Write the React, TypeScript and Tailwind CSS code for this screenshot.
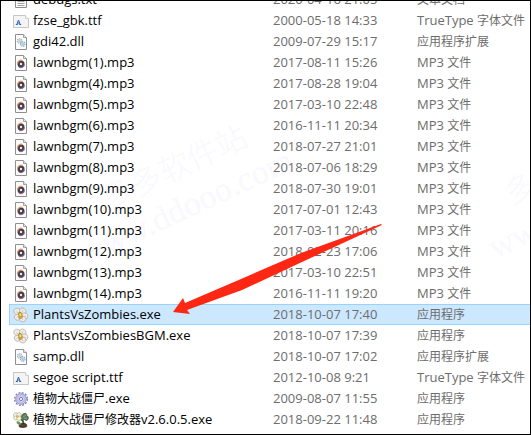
import type { ReactNode } from "react";

type Kind = "txt" | "ttf" | "dll" | "mp3" | "flower" | "gear" | "plant";

type FileRow = {
  name: string;
  date: string;
  type: string;
  kind: Kind;
};

const SELECTED = "PlantsVsZombies.exe";

const files: FileRow[] = [
  { name: "debugs.txt", date: "2020-04-16 21:05", type: "文本文档", kind: "txt" },
  { name: "fzse_gbk.ttf", date: "2000-05-18 14:33", type: "TrueType 字体文件", kind: "ttf" },
  { name: "gdi42.dll", date: "2009-07-29 15:17", type: "应用程序扩展", kind: "dll" },
  { name: "lawnbgm(1).mp3", date: "2017-08-11 15:26", type: "MP3 文件", kind: "mp3" },
  { name: "lawnbgm(4).mp3", date: "2017-08-28 19:04", type: "MP3 文件", kind: "mp3" },
  { name: "lawnbgm(5).mp3", date: "2017-03-10 22:48", type: "MP3 文件", kind: "mp3" },
  { name: "lawnbgm(6).mp3", date: "2016-11-11 20:34", type: "MP3 文件", kind: "mp3" },
  { name: "lawnbgm(7).mp3", date: "2018-07-27 21:01", type: "MP3 文件", kind: "mp3" },
  { name: "lawnbgm(8).mp3", date: "2018-07-06 18:29", type: "MP3 文件", kind: "mp3" },
  { name: "lawnbgm(9).mp3", date: "2018-07-30 19:01", type: "MP3 文件", kind: "mp3" },
  { name: "lawnbgm(10).mp3", date: "2017-07-01 12:43", type: "MP3 文件", kind: "mp3" },
  { name: "lawnbgm(11).mp3", date: "2017-03-11 20:16", type: "MP3 文件", kind: "mp3" },
  { name: "lawnbgm(12).mp3", date: "2018-02-23 17:06", type: "MP3 文件", kind: "mp3" },
  { name: "lawnbgm(13).mp3", date: "2017-03-10 22:51", type: "MP3 文件", kind: "mp3" },
  { name: "lawnbgm(14).mp3", date: "2016-11-11 19:20", type: "MP3 文件", kind: "mp3" },
  { name: "PlantsVsZombies.exe", date: "2018-10-07 17:40", type: "应用程序", kind: "flower" },
  { name: "PlantsVsZombiesBGM.exe", date: "2018-10-07 17:39", type: "应用程序", kind: "flower" },
  { name: "samp.dll", date: "2018-10-07 17:02", type: "应用程序扩展", kind: "dll" },
  { name: "segoe script.ttf", date: "2012-10-08 9:21", type: "TrueType 字体文件", kind: "ttf" },
  { name: "植物大战僵尸.exe", date: "2009-08-07 11:55", type: "应用程序", kind: "gear" },
  { name: "植物大战僵尸修改器v2.6.0.5.exe", date: "2018-09-22 11:48", type: "应用程序", kind: "plant" },
];

function Page({ children }: { children?: ReactNode }) {
  return (
    <>
      <path d="M2.5.5h8l3 3v12h-11z" fill="#fdfdfd" stroke="#8f8f8f" />
      <path d="M10.5.5v3h3" fill="#e8e8e8" stroke="#a0a0a0" />
      {children}
    </>
  );
}

function Flower() {
  return (
    <>
      <g fill="#efebe6" stroke="#a09890" strokeWidth=".6">
        <path d="M7 8C3 8.500.6 6.500.8 3.600 1.500.8 5 .6 7 2.500 8 4 8 6 7 8z" />
        <path d="M7 7C6 4 6.500 1 9.500 1c3 .2 4 3 3.300 5-1 2.500-4 3-5.800 1z" />
        <path d="M8 8c1.500-2.500 5-2.600 6.500-.5 1 2.500-.5 5-3 5.200-2.500-.5-4-2.500-3.500-4.700z" />
        <path d="M7.500 9c2.500-.5 5.500 1 5.500 3.500-.5 2.500-3.500 3-5.500 1.800C6 12.800 6 10.500 7.500 9z" />
        <path d="M7 8.500c.5 2.500-.5 5-2.700 4.800C2 13 .6 10.500 1.600 8.500c1.500-1.800 4-1.500 5.400 0z" />
      </g>
      <path d="M3 4.500l3 2M10 3L8.800 6M13 9.500l-3-.3M10 13l-1.300-2.200M3.500 10.500l2-1.200" stroke="#c9c0b6" strokeWidth=".7" />
      <path d="M6 5.500c1.500-.6 3 .2 3 2.500 1 2-.2 3.500-1.500 3.500S5.200 10.500 5.800 8.500C5.300 7.500 5.300 6 6 5.500z" fill="#d9a92c" stroke="#8d7131" strokeWidth=".6" />
      <ellipse cx="7.300" cy="7.800" rx="1" ry="1.300" fill="#ffe765" />
    </>
  );
}

function FileIcon({ kind }: { kind: Kind }) {
  return (
    <svg className="size-4 shrink-0" viewBox="0 0 16 16" fill="none" aria-hidden="true">
      {kind === "txt" && (
        <Page>
          <path d="M4.500 5.500h7M4.500 7.500h7M4.500 9.500h7M4.500 11.500h7M4.500 13.500h7" stroke="#a4a4a4" />
        </Page>
      )}
      {kind === "mp3" && (
        <Page>
          <circle cx="8" cy="9" r="3.500" fill="#413f4a" />
          <path d="M4.600 8.500A3.500 3.500 0 0 1 9.500 5.500" stroke="#ee8a52" strokeWidth="1.200" />
          <path d="M11.400 9.500A3.500 3.500 0 0 1 6 12" stroke="#9a6288" strokeWidth="1.100" />
          <circle cx="8" cy="9" r="1.200" fill="#fff" />
          <circle cx="8" cy="9" r=".4" fill="#777" />
        </Page>
      )}
      {kind === "dll" && (
        <Page>
          <circle cx="6.700" cy="7" r="2.300" fill="#e5edf2" stroke="#9fadb6" strokeDasharray="1.200 .6" strokeWidth="1.100" />
          <circle cx="6.700" cy="7" r=".8" fill="#fff" stroke="#9aabb5" strokeWidth=".6" />
          <circle cx="9.800" cy="10" r="2.300" fill="#d5eaf4" stroke="#84adc4" strokeDasharray="1.200 .6" strokeWidth="1.100" />
          <circle cx="9.800" cy="10" r=".8" fill="#fff" stroke="#7babc3" strokeWidth=".6" />
        </Page>
      )}
      {kind === "ttf" && (
        <>
          <path d="M.5 2.500h12l3 3v9H.5z" fill="#f4f4f4" stroke="#c6c6c6" />
          <path d="M12.500 2.500v3h3" fill="#fff" stroke="#d0d0d0" />
          <path d="M2.800 11.500h2M3.800 11.500L5.500 7l1.700 4.500M4.300 10h2.300M6.200 11.500h2" stroke="#2f62bd" />
        </>
      )}
      {kind === "flower" && <Flower />}
      {kind === "gear" && (
        <>
          <circle cx="8" cy="8" r="6.300" stroke="#8787bd" strokeWidth="1.600" strokeDasharray="1.900 1.400" />
          <circle cx="8" cy="8" r="5.300" fill="#c6c6ea" stroke="#9a9acf" />
          <circle cx="8" cy="8" r="3.400" fill="#d6d6f4" stroke="#adaddb" strokeWidth=".7" />
          <circle cx="8" cy="8" r="1.600" fill="#fff" stroke="#7676b5" />
        </>
      )}
      {kind === "plant" && (
        <>
          <path d="M7 7c3 1 4 3 3 6" stroke="#3c5a30" strokeWidth="1.800" />
          <path d="M8 6c0-2 1-4 3-4.500 2-.7 3 .5 2.500 2 2 .5 2.500 3 1 4.500-1 1-2 .2-3-.5C10 8.500 8.500 8 8 6z" fill="#5d7a58" stroke="#34482f" strokeWidth=".7" />
          <path d="M10 4.500l3-1M11 6l3 .8" stroke="#9fb398" strokeWidth=".7" />
          <path d="M6 14c0-2 2-3 4-2.600 3-.4 4.500 1.500 3.500 3.400-2 .9-5 .9-7 .2z" fill="#53402f" stroke="#2c261d" strokeWidth=".7" />
          <path d="M3.500 9.500c2-.6 4 .2 4.500 3-2.500.8-4.500-.4-4.500-3z" fill="#6e9950" />
          <g fill="#f5f2e8" stroke="#aba595" strokeWidth=".6">
            <circle cx="2.800" cy="3" r="2.300" />
            <circle cx="6" cy="2.800" r="2.200" />
            <circle cx="2.600" cy="6" r="2" />
            <circle cx="6" cy="6.300" r="2.300" />
          </g>
          <circle cx="4.400" cy="4.600" r="1.300" fill="#dcb63c" />
        </>
      )}
    </svg>
  );
}

// Chinese runs are set one step smaller than the Latin ones
function Label({ text }: { text: string }) {
  return (
    <>
      {text.split(/([\u4e00-\u9fff]+)/).map((part, i) =>
        i % 2 ? (
          <span key={i} className="text-[12px]">
            {part}
          </span>
        ) : (
          part
        ),
      )}
    </>
  );
}

function Watermark() {
  return (
    <svg
      className="pointer-events-none absolute top-0 left-0 h-full w-full font-['Liberation_Serif','Noto_Sans_CJK_SC',serif] font-light"
      fill="#f8f8fe"
      aria-hidden="true"
    >
      <text fontSize="31" transform="translate(108 209) rotate(-25)">
        多多软件站
      </text>
      <text fontSize="34" transform="translate(84 265) rotate(-25)">
        www.ddooo.com
      </text>
      <text fontSize="31" transform="translate(510 204) rotate(-25)">
        多
      </text>
      <text fontSize="34" transform="translate(494 258) rotate(-25)">
        ww
      </text>
    </svg>
  );
}

function Arrow() {
  return (
    <svg
      className="pointer-events-none absolute top-[222px] left-[170px] h-[96px] w-[214px]"
      viewBox="0 0 214 96"
      aria-hidden="true"
    >
      <path d="M2 89L12 75l2 5 56-24 60-26L210 1l1 1-80 37-60 28-55 20 3 4z" fill="#fd2714" />
    </svg>
  );
}

export default function App() {
  return (
    <main className="relative overflow-hidden border border-black bg-white pb-1 pl-2 font-['Open_Sans','Noto_Sans_CJK_SC',sans-serif] text-[13px]">
      <Watermark />
      <table className="relative -mt-3 w-full table-fixed border-separate border-spacing-0 text-left">
        <colgroup>
          <col className="w-[264px]" />
          <col className="w-[144px]" />
          <col />
        </colgroup>
        <tbody>
          {files.map((f) => {
            const on = f.name === SELECTED;
            const cell = on ? "border-y border-[#99d1ff] bg-[#cce8ff]" : "border-y border-transparent";
            return (
              <tr key={f.name} aria-selected={on} className="h-[21px] leading-[19px] whitespace-nowrap text-[#6d6d6d]">
                <td className={`${cell} border-l p-0 pl-[3px] text-black`}>
                  <div className="flex items-center gap-1">
                    <FileIcon kind={f.kind} />
                    <span>
                      <Label text={f.name} />
                    </span>
                  </div>
                </td>
                <td className={`${cell} p-0`}>{f.date}</td>
                <td className={`${cell} p-0`}>
                  <Label text={f.type} />
                </td>
              </tr>
            );
          })}
        </tbody>
      </table>
      <Arrow />
    </main>
  );
}
